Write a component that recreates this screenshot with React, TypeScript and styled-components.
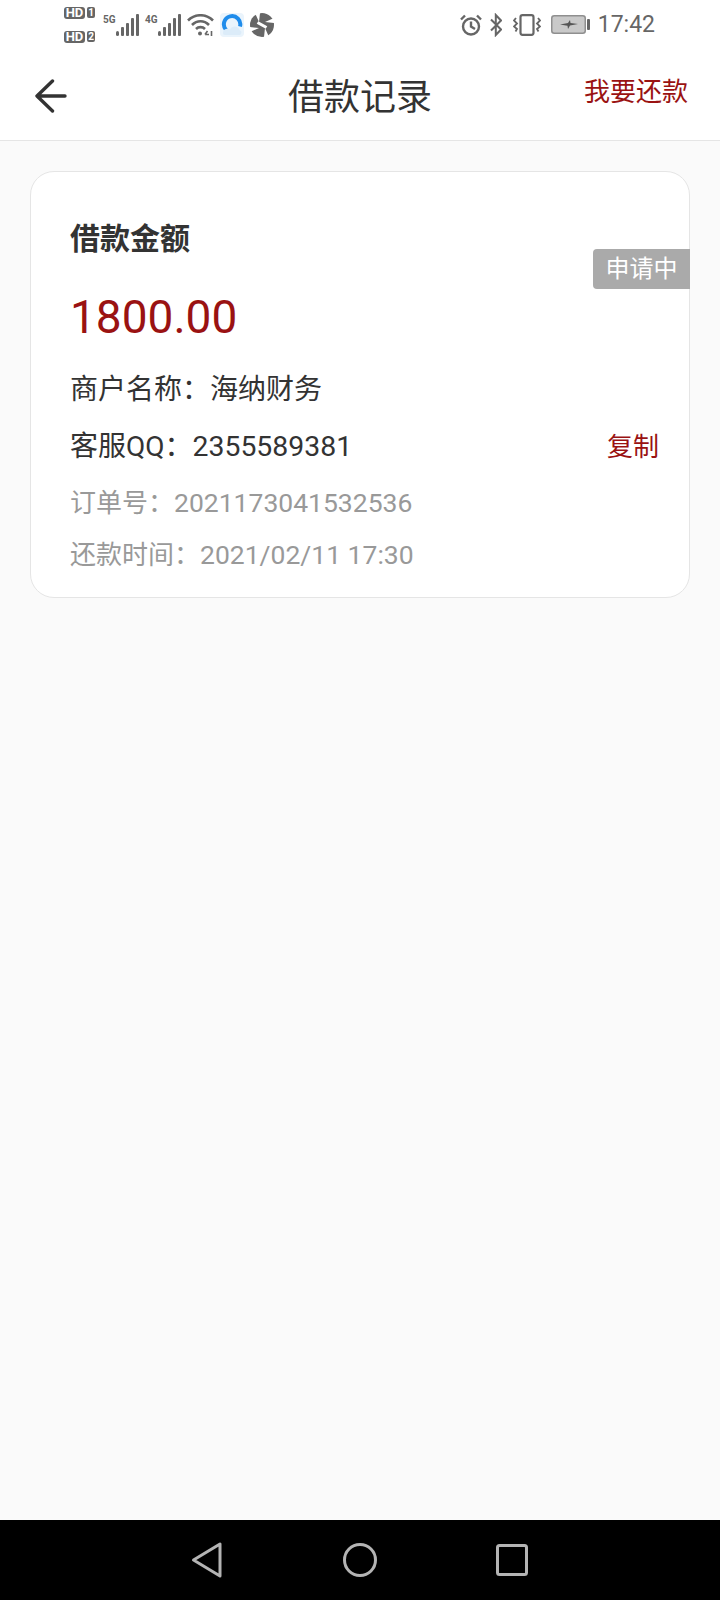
import React from 'react';
import styled, { createGlobalStyle } from 'styled-components';

const GlobalStyle = createGlobalStyle`
  html, body {
    margin: 0;
    padding: 0;
    background: #fafafa;
    font-family: Roboto, "Noto Sans CJK SC", sans-serif;
  }
`;

const Signal: React.FC = () => (
  <svg width="23" height="22" viewBox="0 0 23 22" fill="#666">
    <rect x="0" y="17" width="3" height="5" rx="1.5" />
    <rect x="5" y="13" width="3" height="9" rx="1" />
    <rect x="10" y="9" width="3" height="13" rx="1" />
    <rect x="15" y="4" width="3" height="18" rx="1" />
    <rect x="20" y="0" width="3" height="22" rx="1" />
  </svg>
);

const SimTag: React.FC<{ n: string }> = ({ n }) => (
  <SimRow>
    <HdBox>HD</HdBox>
    <SimNum>{n}</SimNum>
  </SimRow>
);

export default function App() {
  return (
    <Page>
      <GlobalStyle />
      <StatusBar>
        <StatusGroup $gap={6}>
          <SimColumn>
            <SimTag n="1" />
            <SimTag n="2" />
          </SimColumn>
          <NetGroup>
            <NetLabel>5G</NetLabel>
            <Signal />
          </NetGroup>
          <NetGroup>
            <NetLabel>4G</NetLabel>
            <Signal />
          </NetGroup>
          <svg width="27" height="22" viewBox="0 0 27 22" fill="none" stroke="#666" strokeWidth="2.6">
            <path d="M1 6.5 C8 -0.5 19 -0.5 26 6.5" />
            <path d="M5 11 C10 6 17 6 22 11" />
            <path d="M9 15 C11.5 12.5 15.5 12.5 18 15" />
            <circle cx="13" cy="19.5" r="2" fill="#666" stroke="none" />
            <path d="M18 20.5 h4 M20.5 17 l-2.5 3.5 M24.5 17 v5" strokeWidth="1.6" />
          </svg>
          <svg width="24" height="24" viewBox="0 0 24 24">
            <rect width="24" height="24" rx="4" fill="#eaf4fc" />
            <path d="M6.2 17 A8.2 8.2 0 1 1 20 13.5" fill="none" stroke="#1f8ceb" strokeWidth="4" />
            <path d="M3 20 C3 16 8 15 10 16.5 C12.5 12 18 13 20 17.5 C22 18 22 21.5 19.5 22 H5 C3.5 22 3 21 3 20 Z" fill="#dcecf9" />
          </svg>
          <svg width="24" height="24" viewBox="0 0 24 24">
            <circle cx="12" cy="12" r="12" fill="#666" />
            <path d="M5 0 L10 0 L9 9 Z M24 5 L24 10 L15 9 Z M19 24 L14 24 L15 15 Z M0 19 L0 14 L9 15 Z" fill="#fff" />
            <path d="M7.5 9.5 L16.5 14.5" stroke="#fff" strokeWidth="3" />
          </svg>
        </StatusGroup>
        <StatusGroup $gap={8}>
          <svg width="22" height="22" viewBox="0 0 22 22" fill="none" stroke="#666" strokeWidth="2.4">
            <circle cx="11" cy="12.5" r="8" />
            <path d="M11 7.5 V12.5 L15 15" />
            <path d="M1 5.5 L5 1.5 M21 5.5 L17 1.5" />
          </svg>
          <svg width="12" height="24" viewBox="0 0 12 24" fill="none" stroke="#666" strokeWidth="2">
            <path d="M1 6.5 L11 16.5 L5.8 22 V2 L11 7.5 L1 17.5" />
          </svg>
          <VibrateIcon width="28" height="22" viewBox="0 0 28 22" fill="none" stroke="#666" strokeWidth="2.2">
            <rect x="7.5" y="1.2" width="13" height="19.6" rx="2" />
            <path d="M3 4 L1 6.5 L4 9.5 L1 12.5 L4 15 L2.5 17.5 M25 4 L27 6.5 L24 9.5 L27 12.5 L24 15 L25.5 17.5" strokeWidth="1.8" />
          </VibrateIcon>
          <BatteryIcon width="39" height="19" viewBox="0 0 39 19">
            <rect x="0.75" y="0.75" width="33.5" height="17.5" rx="2.5" fill="#c9c9c9" stroke="#8f8f8f" strokeWidth="1.5" />
            <rect x="36" y="4" width="3" height="11" rx="1" fill="#666" />
            <path d="M9 9.5 L17 8 L19 5 L19.5 8 L27 9 L19 10.5 L17 14 L16.5 10.8 Z" fill="#555" />
          </BatteryIcon>
          <Clock>17:42</Clock>
        </StatusGroup>
      </StatusBar>

      <Header>
        <BackIcon width="32" height="34" viewBox="0 0 32 34" fill="none" stroke="#333" strokeWidth="3.4" strokeLinecap="round" strokeLinejoin="round">
          <path d="M30 17 H3 M17.5 2 L2 17 L17.5 32" />
        </BackIcon>
        <Title>借款记录</Title>
        <RepayLink>我要还款</RepayLink>
      </Header>

      <Main>
        <Card>
          <Badge>申请中</Badge>
          <CardLabel>借款金额</CardLabel>
          <Amount>1800.00</Amount>
          <InfoRow>商户名称：海纳财务</InfoRow>
          <InfoRow>
            <span>
              客服QQ：<InfoValue>2355589381</InfoValue>
            </span>
            <CopyLink>复制</CopyLink>
          </InfoRow>
          <MetaRow>
            订单号：<MetaValue>2021173041532536</MetaValue>
          </MetaRow>
          <MetaRow>
            还款时间：<MetaValue>2021/02/11 17:30</MetaValue>
          </MetaRow>
        </Card>
      </Main>

      <NavBar>
        <svg width="30" height="36" viewBox="0 0 30 36" fill="none" stroke="#b4b4b4" strokeWidth="3" strokeLinejoin="round" overflow="visible">
          <path d="M27 2 V34 L0.5 18 Z" />
        </svg>
        <svg width="34" height="34" viewBox="0 0 34 34" fill="none" stroke="#b4b4b4" strokeWidth="3">
          <circle cx="17" cy="17" r="15.5" />
        </svg>
        <svg width="32" height="32" viewBox="0 0 32 32" fill="none" stroke="#b4b4b4" strokeWidth="3">
          <rect x="1.5" y="1.5" width="29" height="29" rx="2" />
        </svg>
      </NavBar>
    </Page>
  );
}

const Page = styled.div`
  width: 720px;
  height: 1600px;
  display: flex;
  flex-direction: column;
  background: #fafafa;
  color: #333;
`;

const StatusBar = styled.div`
  height: 51px;
  flex: none;
  box-sizing: border-box;
  padding: 0 65px 2px 64px;
  display: flex;
  justify-content: space-between;
  align-items: center;
  background: #fff;
`;

const StatusGroup = styled.div<{ $gap: number }>`
  display: flex;
  align-items: center;
  gap: ${(p) => p.$gap}px;
`;

const SimColumn = styled.div`
  display: flex;
  flex-direction: column;
  gap: 12px;
  width: 33px;
`;

const SimRow = styled.div`
  display: flex;
  align-items: center;
  gap: 2px;
`;

const HdBox = styled.span`
  width: 21px;
  height: 12px;
  border-radius: 3px;
  background: #666;
  color: #fff;
  font-size: 13px;
  font-weight: 700;
  line-height: 12px;
  text-align: center;
`;

const SimNum = styled.span`
  width: 8px;
  height: 11px;
  border-radius: 2px;
  background: #666;
  color: #fff;
  font-size: 10px;
  font-weight: 700;
  line-height: 11px;
  text-align: center;
`;

const NetGroup = styled.div`
  display: flex;
  justify-content: space-between;
  align-items: flex-end;
  width: 36px;
  height: 22px;
`;

const NetLabel = styled.span`
  align-self: flex-start;
  width: 12px;
  margin-top: 1px;
  font-size: 10px;
  font-weight: 700;
  line-height: 10px;
  color: #666;
`;

const VibrateIcon = styled.svg`
  margin-left: 3px;
`;

const BatteryIcon = styled.svg`
  margin-left: 2px;
`;

const Clock = styled.span`
  font-size: 23px;
  line-height: 28px;
  color: #666;
`;

const Header = styled.header`
  height: 90px;
  flex: none;
  box-sizing: border-box;
  padding: 0 32px;
  display: grid;
  grid-template-columns: 1fr auto 1fr;
  align-items: center;
  background: #fff;
  border-bottom: 1px solid #e5e5e5;
`;

const BackIcon = styled.svg`
  margin-left: 3px;
`;

const Title = styled.h1`
  margin: 4px 0 0;
  font-size: 36px;
  font-weight: 400;
  line-height: 44px;
  color: #333;
`;

const RepayLink = styled.a`
  justify-self: end;
  margin-bottom: 8px;
  font-size: 26px;
  line-height: 34px;
  color: #9a1212;
`;

const Main = styled.main`
  flex: 1;
  padding: 30px 30px 0 30px;
`;

const Card = styled.section`
  position: relative;
  box-sizing: border-box;
  height: 427px;
  padding: 47px 30px 0 39px;
  background: #fff;
  border: 1px solid #e5e5e5;
  border-radius: 24px;
`;

const Badge = styled.div`
  position: absolute;
  top: 77px;
  right: -1px;
  width: 97px;
  height: 40px;
  border-radius: 4px 0 0 4px;
  background: #aaa;
  color: #fff;
  font-size: 24px;
  line-height: 40px;
  text-align: center;
`;

const CardLabel = styled.div`
  font-size: 30px;
  font-weight: 700;
  line-height: 40px;
  color: #333;
`;

const Amount = styled.div`
  margin: 30px 0 16px;
  font-size: 46px;
  line-height: 56px;
  color: #9a1212;
`;

const InfoRow = styled.div`
  display: flex;
  justify-content: space-between;
  height: 58px;
  font-size: 28px;
  line-height: 58px;
  color: #333;
  & + & {
    margin-top: -1px;
  }
`;

const InfoValue = styled.span`
  font-size: 28.4px;
`;

const CopyLink = styled.a`
  font-size: 26px;
  color: #9a1212;
`;

const MetaRow = styled.div`
  height: 52px;
  font-size: 26px;
  line-height: 52px;
  color: #999;
  ${InfoRow} + & {
    margin-top: 1px;
  }
`;

const MetaValue = styled.span`
  font-size: 26.5px;
`;

const NavBar = styled.nav`
  height: 80px;
  flex: none;
  box-sizing: border-box;
  padding: 0 192px 0 193px;
  display: flex;
  justify-content: space-between;
  align-items: center;
  background: #000;
`;
